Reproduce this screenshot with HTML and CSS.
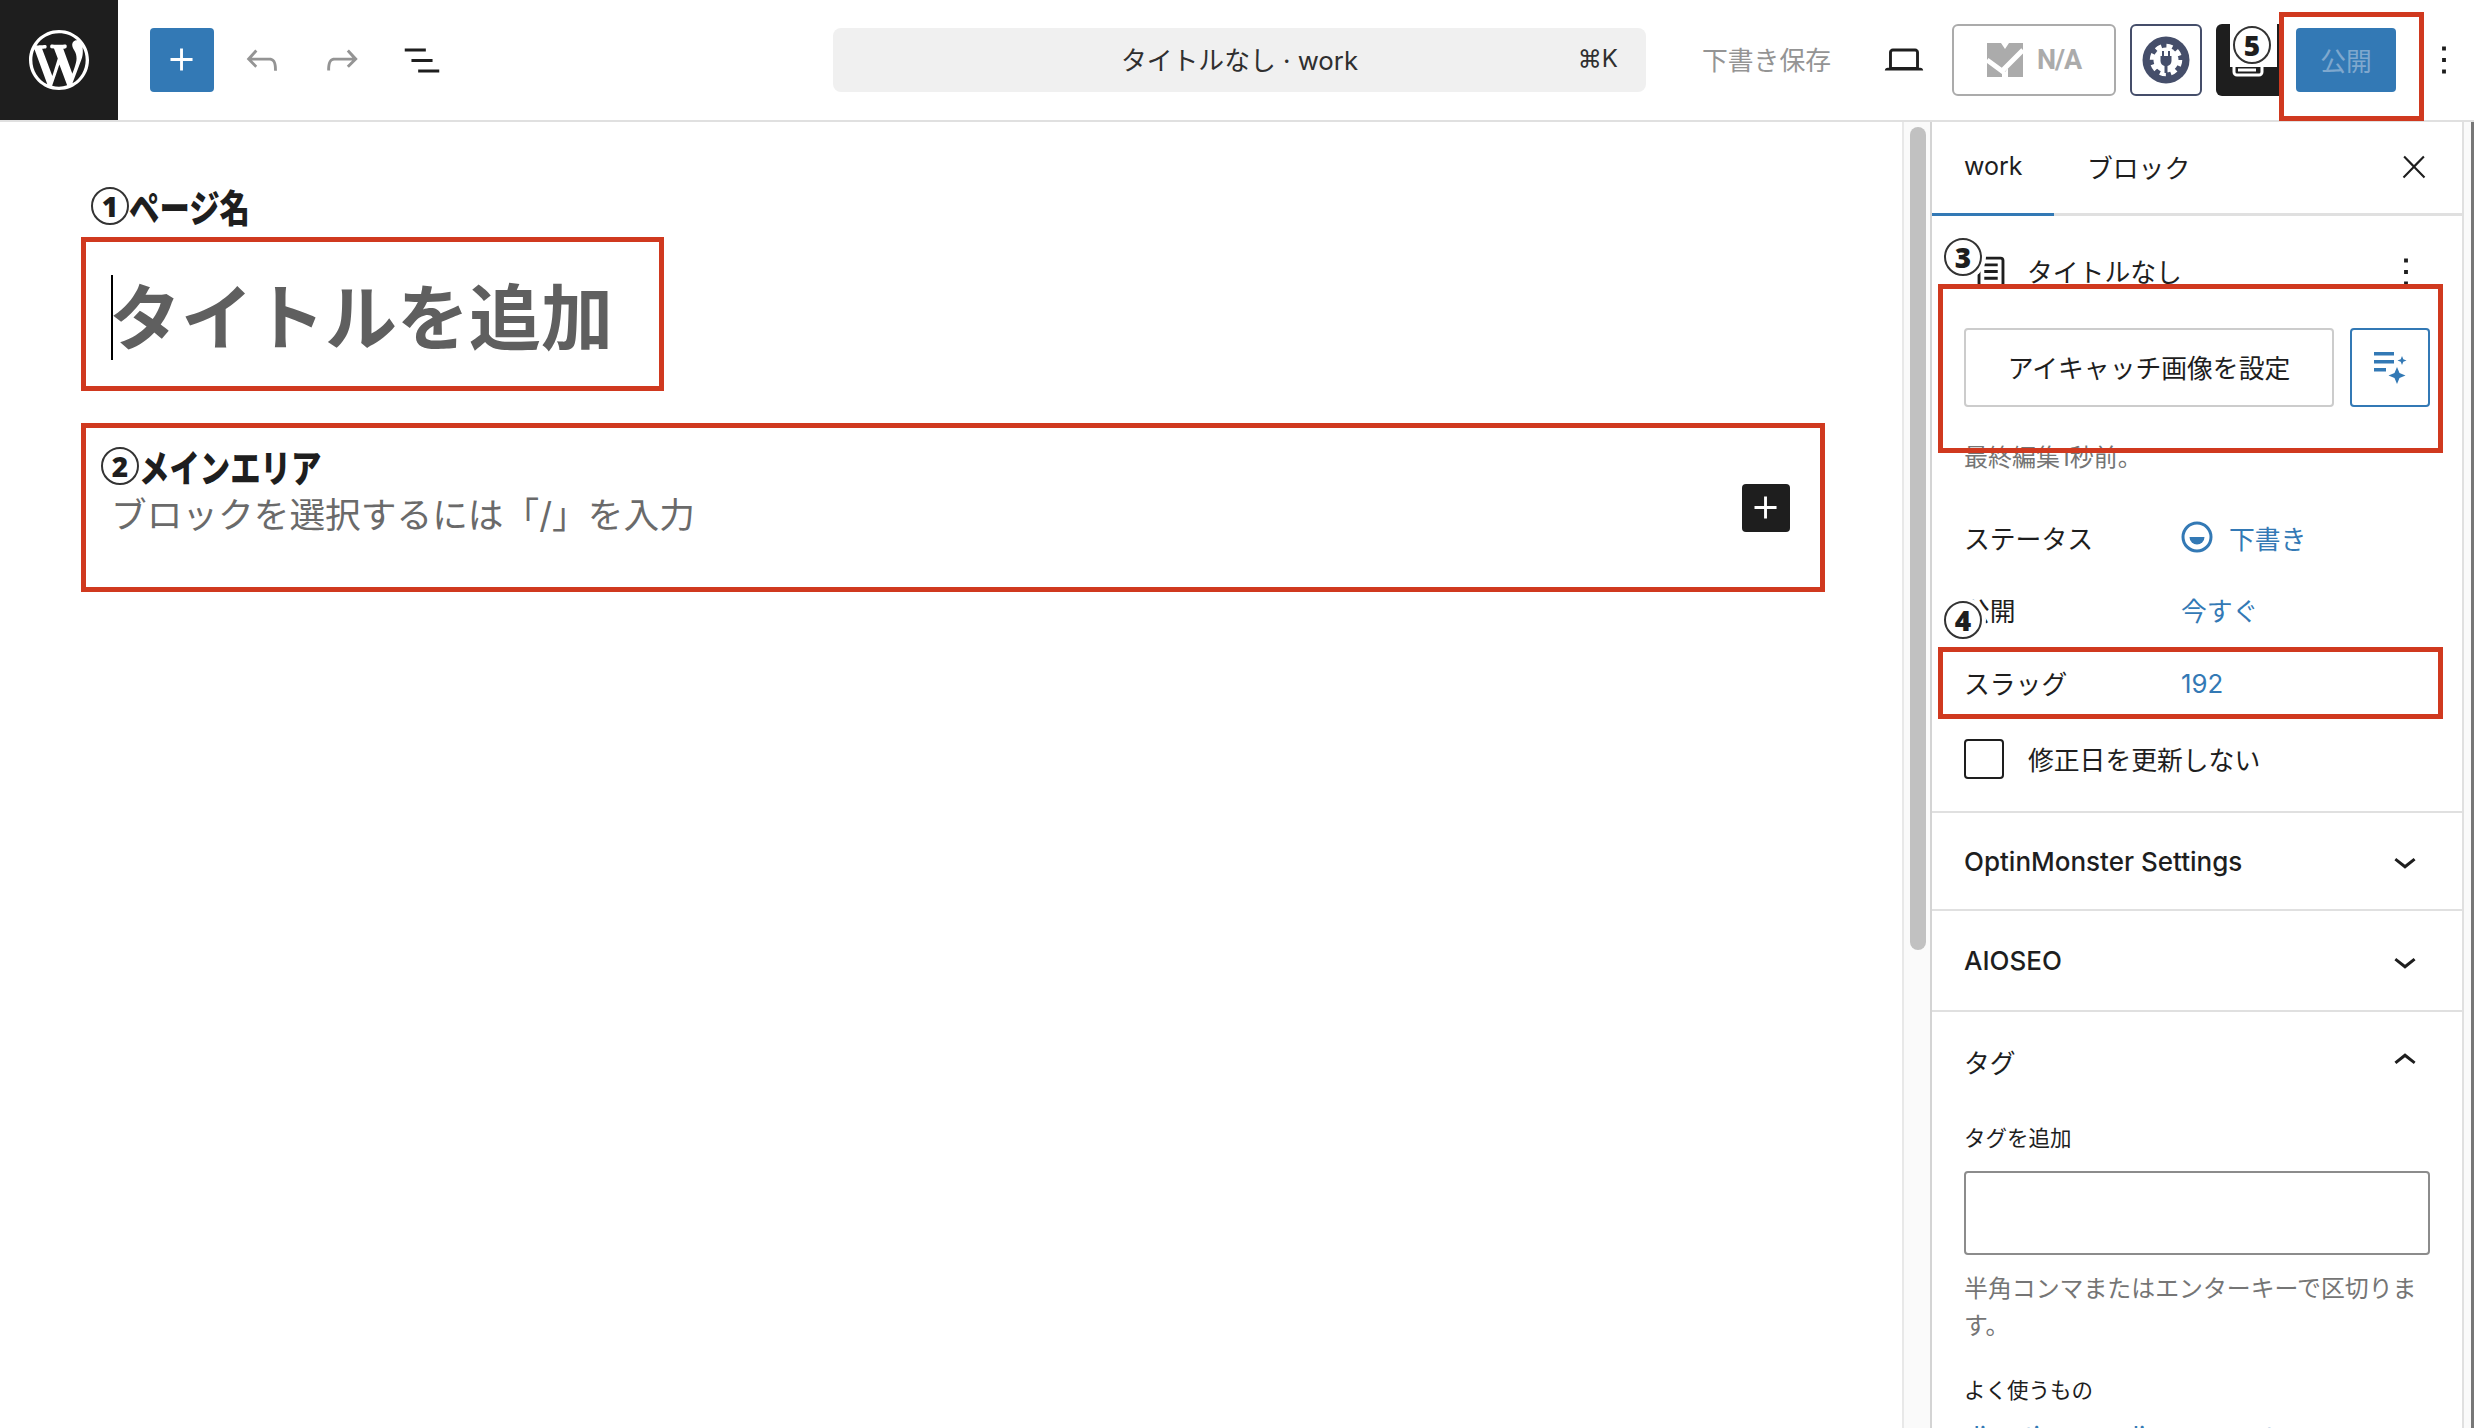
FILE: index.html
```html
<!DOCTYPE html>
<html lang="ja">
<head>
    <meta charset="UTF-8">
    <title>タイトルなし · work</title>
    <link rel="stylesheet" href="styles.css">
</head>
<body>
<div class="page">
    <header class="toolbar">
        <div class="wp-logo">
            <svg width="60" height="60" viewBox="0 0 20 20" fill="#fff"><path d="M20 10c0-5.51-4.49-10-10-10C4.48 0 0 4.49 0 10c0 5.52 4.48 10 10 10 5.51 0 10-4.48 10-10zM7.78 15.37L4.37 6.22c.55-.02 1.17-.08 1.17-.08.5-.06.44-1.13-.06-1.11 0 0-1.45.11-2.37.11-.18 0-.37 0-.58-.01C4.12 2.69 6.87 1.11 10 1.11c2.33 0 4.45.87 6.05 2.34-.68-.11-1.65.39-1.65 1.58 0 .74.45 1.36.9 2.1.35.61.55 1.36.55 2.46 0 1.49-1.4 5-1.4 5l-3.03-8.37c.54-.02.82-.17.82-.17.5-.05.44-1.25-.06-1.22 0 0-1.44.12-2.38.12-.87 0-2.33-.12-2.33-.12-.5-.03-.56 1.2-.06 1.22l.92.08 1.26 3.41zM17.41 10c.24-.64.74-1.87.43-4.25.7 1.29 1.05 2.71 1.05 4.25 0 3.29-1.73 6.24-4.4 7.78.97-2.59 1.94-5.2 2.92-7.78zM6.1 18.09C3.12 16.65 1.11 13.53 1.11 10c0-1.3.23-2.48.72-3.59C3.25 10.3 4.67 14.2 6.1 18.09zm4.03-6.63l2.58 6.98c-.86.29-1.76.45-2.71.45-.79 0-1.57-.11-2.29-.33.81-2.38 1.62-4.74 2.42-7.1z"/></svg>
        </div>
        <div class="btn-add">
            <svg width="46" height="46" viewBox="0 0 24 24" fill="#fff"><path d="M11 12.5V17.5H12.5V12.5H17.5V11H12.5V6H11V11H6V12.5H11Z"/></svg>
        </div>
        <svg class="tool tool-undo" width="46" height="46" viewBox="0 0 24 24" fill="#949494"><path d="M18.3 11.7c-.6-.6-1.4-.9-2.3-.9H6.7l2.9-3.3-1.1-1-4.5 5L8.5 16l1-1-2.7-2.7H16c.5 0 .9.2 1.3.5 1 1 1 3.4 1 4.5v.3h1.5v-.2c0-1.5 0-4.3-1.5-5.7z"/></svg>
        <svg class="tool" width="46" height="46" viewBox="0 0 24 24" fill="#949494"><path d="M15.6 6.5l-1.1 1 2.9 3.3H8c-.9 0-1.7.3-2.3.9-1.4 1.5-1.4 4.2-1.4 5.6v.2h1.5v-.3c0-1.1 0-3.5 1-4.5.3-.3.7-.5 1.3-.5h9.2L14.5 15l1.1 1.1 4.6-4.6-4.6-5z"/></svg>
        <svg class="tool" width="46" height="46" viewBox="0 0 24 24" fill="#1e1e1e"><path d="M3 6h11v1.5H3V6zm3.5 5.5h11V13h-11v-1.5zM21 17H10v1.5h11V17z"/></svg>

        <div class="search-bar">
            <span>タイトルなし · work</span>
            <span class="shortcut">⌘K</span>
        </div>

        <span class="save-draft">下書き保存</span>
        <svg class="tool-view" width="46" height="46" viewBox="0 0 24 24" fill="#1e1e1e"><path d="M20.5 16h-.7V8c0-1.1-.9-2-2-2H6.2c-1.1 0-2 .9-2 2v8h-.7c-.8 0-1.5.7-1.5 1.5h20c0-.8-.7-1.5-1.5-1.5zM5.7 8c0-.3.2-.5.5-.5h11.6c.3 0 .5.2.5.5v7.6H5.7V8z"/></svg>

        <div class="btn-score">
            <svg width="36" height="34" viewBox="0 0 36 34">
                <path d="M0 0h14l4 6 4-6h14v34H21v-9l-3 4-3-4v9H0z" fill="#ababab"/>
                <path d="M0 17l15 11L36 7" fill="none" stroke="#fff" stroke-width="5"/>
            </svg>
            <span>N/A</span>
        </div>

        <div class="btn-plugin">
            <svg width="48" height="48" viewBox="0 0 48 48">
                <circle cx="24" cy="24" r="23.5" fill="#454e6a"/>
                <circle cx="24" cy="24" r="14" fill="none" stroke="#fff" stroke-width="4.500" stroke-dasharray="6 5"/>
                <circle cx="24" cy="24" r="12.500" fill="#fff"/>
                <path d="M20 15h2v5h4v-5h2v5h1.500v5a5.500 5.500 0 0 1-4 5v7h-3v-7a5.500 5.500 0 0 1-4-5v-5H20z" fill="#454e6a"/>
            </svg>
        </div>

        <div class="btn-panel">
            <svg width="64" height="72" viewBox="0 0 64 72" fill="none" stroke="#fff" stroke-width="3"><rect x="18" y="25" width="28" height="26" rx="3"/><path d="M22 46h18"/></svg>
        </div>

        <div class="btn-publish">公開</div>

        <svg class="tool-more" width="46" height="46" viewBox="0 0 24 24" fill="#1e1e1e"><path d="M13 19h-2v-2h2v2zm0-6h-2v-2h2v2zm0-6h-2V5h2v2z"/></svg>
    </header>

    <div class="workspace">
        <main class="editor">
            <h1 class="post-title"><span>タイトルを追加</span></h1>
            <div class="block-row">
                <p class="block-hint">ブロックを選択するには「/」を入力</p>
                <div class="block-add">
                    <svg width="46" height="46" viewBox="0 0 24 24" fill="#fff"><path d="M11 12.5V17.5H12.5V12.5H17.5V11H12.5V6H11V11H6V12.5H11Z"/></svg>
                </div>
            </div>
        </main>

        <div class="scroll-track"><div class="scroll-thumb"></div></div>

        <aside class="sidebar">
            <div class="tabs">
                <span class="tab tab-active">work</span>
                <span class="tab">ブロック</span>
                <svg class="tabs-close" width="36" height="36" viewBox="0 0 24 24" fill="#1e1e1e"><path d="M13 11.8l6.1-6.3-1-1-6.1 6.2-6.1-6.2-1 1 6.1 6.3-6.5 6.7 1 1 6.5-6.6 6.5 6.6 1-1z"/></svg>
            </div>

            <section class="post-panel">
                <div class="post-head">
                    <svg class="post-icon" width="46" height="46" viewBox="0 0 24 24" fill="#1e1e1e"><path d="M15.5 7.5h-7V9h7V7.5Zm-7 3.5h7v1.5h-7V11Zm7 3.5h-7V16h7v-1.5Z"/><path d="M17 4H7a2 2 0 0 0-2 2v12a2 2 0 0 0 2 2h10a2 2 0 0 0 2-2V6a2 2 0 0 0-2-2Zm.5 14a.5.5 0 0 1-.5.5H7a.5.5 0 0 1-.5-.5V6a.5.5 0 0 1 .5-.5h10a.5.5 0 0 1 .5.5v12Z"/></svg>
                    <span class="post-name">タイトルなし</span>
                    <svg class="post-more" width="46" height="46" viewBox="0 0 24 24" fill="#1e1e1e"><path d="M13 19h-2v-2h2v2zm0-6h-2v-2h2v2zm0-6h-2V5h2v2z"/></svg>
                </div>

                <div class="featured">
                    <div class="featured-btn">アイキャッチ画像を設定</div>
                    <div class="featured-ai">
                        <svg width="40" height="40" viewBox="0 0 40 40" fill="#3379b5">
                            <rect x="4" y="4" width="20" height="3.5"/>
                            <rect x="4" y="12" width="20" height="3.5"/>
                            <rect x="4" y="20" width="12" height="3.5"/>
                            <path d="M27 19l2.500 6 6 2.500-6 2.500-2.500 6-2.500-6-6-2.500 6-2.500z"/>
                            <path d="M32 8l1.300 3.200 3.200 1.300-3.200 1.300-1.300 3.200-1.300-3.200-3.200-1.300 3.200-1.300z"/>
                        </svg>
                    </div>
                </div>

                <p class="last-edit">最終編集1秒前。</p>

                <div class="meta-rows">
                    <div class="meta-row">
                        <span class="meta-label">ステータス</span>
                        <span class="meta-value">
                            <svg class="draft-icon" width="32" height="32" viewBox="0 0 32 32"><circle cx="16" cy="16" r="14" fill="none" stroke="#3379b5" stroke-width="3"/><path d="M8.500 16h15a7.500 7.500 0 0 1-15 0z" fill="#3379b5"/></svg>
                            下書き
                        </span>
                    </div>
                    <div class="meta-row">
                        <span class="meta-label">公開</span>
                        <span class="meta-value">今すぐ</span>
                    </div>
                    <div class="meta-row">
                        <span class="meta-label">スラッグ</span>
                        <span class="meta-value meta-slug">192</span>
                    </div>
                </div>

                <label class="check-row">
                    <span class="check-box"></span>
                    <span class="check-text">修正日を更新しない</span>
                </label>
            </section>

            <section class="fold fold-optin">
                <span>OptinMonster Settings</span>
                <svg width="46" height="46" viewBox="0 0 24 24" fill="#1e1e1e"><path d="M17.500 11.600L12 16l-5.500-4.400.9-1.200L12 14l4.500-3.600 1 1.200z"/></svg>
            </section>
            <section class="fold fold-seo">
                <span>AIOSEO</span>
                <svg width="46" height="46" viewBox="0 0 24 24" fill="#1e1e1e"><path d="M17.500 11.600L12 16l-5.500-4.400.9-1.200L12 14l4.500-3.600 1 1.200z"/></svg>
            </section>

            <section class="tags">
                <div class="tags-head">
                    <span>タグ</span>
                    <svg width="46" height="46" viewBox="0 0 24 24" fill="#1e1e1e"><path d="M6.500 12.400L12 8l5.500 4.400-.9 1.200L12 10l-4.500 3.600-1-1.200z"/></svg>
                </div>
                <div class="tags-label">タグを追加</div>
                <div class="tags-input"></div>
                <p class="tags-help">半角コンマまたはエンターキーで区切ります。</p>
                <div class="tags-popular">よく使うもの</div>
                <div class="tags-links"><span>direction</span><span>media</span><span>concept</span></div>
            </section>
        </aside>
        <div class="edge-strip"></div>
    </div>

    <!-- annotations drawn on top of the screen -->
    <div class="note-box box-publish"></div>
    <div class="note-box box-title"></div>
    <div class="note-box box-main"></div>
    <div class="note-box box-featured"></div>
    <div class="note-box box-slug"></div>

    <div class="note note-1"><span class="ring">1</span><span class="note-text">ページ名</span></div>
    <div class="note note-2"><span class="ring">2</span><span class="note-text">メインエリア</span></div>
    <div class="note note-3"><span class="ring">3</span></div>
    <div class="note note-4"><span class="ring">4</span></div>
    <div class="note-patch"><span class="ring">5</span></div>
</div>
</body>
</html>
```

FILE: styles.css
```css
* {
    box-sizing: border-box;
}

body {
    margin: 0;
    background-color: #fff;
    color: #1e1e1e;
    font-family: "Inter", "Noto Sans CJK JP", sans-serif;
    font-size: 25.8px;
}

p {
    margin: 0;
}

.page {
    position: relative;
    width: 2474px;
    height: 1428px;
    overflow: hidden;
}

/* toolbar */
.toolbar {
    display: flex;
    align-items: center;
    height: 122px;
    border-bottom: 2px solid #e0e0e0;
}

.toolbar > svg {
    flex-shrink: 0;
}

.wp-logo {
    display: flex;
    align-items: center;
    justify-content: center;
    width: 118px;
    height: 120px;
    background-color: #1e1e1e;
}

.btn-add {
    display: flex;
    align-items: center;
    justify-content: center;
    width: 64px;
    height: 64px;
    margin-left: 32px;
    background-color: #3379b5;
    border-radius: 4px;
}

.tool {
    margin-left: 34px;
}

.tool-undo {
    margin-left: 25px;
}

.search-bar {
    position: relative;
    display: flex;
    align-items: center;
    justify-content: center;
    width: 813px;
    height: 64px;
    margin-left: 388px;
    padding-bottom: 3px;
    background-color: #f0f0f0;
    border-radius: 8px;
    color: #2f2f2f;
}

.shortcut {
    position: absolute;
    right: 28px;
    font-size: 24px;
}

.save-draft {
    width: 130px;
    margin-left: 56px;
    margin-right: 1px;
    padding-bottom: 3px;
    color: #949494;
    white-space: nowrap;
}

.tool-view {
    margin-left: 48px;
}

.btn-score {
    display: flex;
    align-items: center;
    justify-content: center;
    gap: 14px;
    width: 164px;
    height: 72px;
    margin-left: 25px;
    border: 2px solid #ababab;
    border-radius: 6px;
    color: #ababab;
    font-family: "Roboto", sans-serif;
    font-size: 27px;
    font-weight: 700;
    letter-spacing: -1px;
}

.btn-plugin {
    display: flex;
    align-items: center;
    justify-content: center;
    width: 72px;
    height: 72px;
    margin-left: 14px;
    border: 2px solid #454e6a;
    border-radius: 6px;
}

.btn-panel {
    width: 64px;
    height: 72px;
    margin-left: 14px;
    background-color: #1e1e1e;
    border-radius: 6px 0 0 6px;
}

.btn-publish {
    display: flex;
    align-items: center;
    justify-content: center;
    width: 100px;
    height: 64px;
    margin-left: 16px;
    padding-bottom: 2px;
    background-color: #3379b5;
    border-radius: 4px;
    color: #7fa8ce;
}

.tool-more {
    margin-left: 25px;
}

/* main area */
.workspace {
    display: flex;
    height: 1306px;
}

.editor {
    width: 1902px;
    padding: 153px 112px 0 111px;
}

.post-title {
    margin: 0;
    font-size: 72px;
    font-weight: 700;
    line-height: 85px;
    color: #5f5f5f;
}

.post-title span {
    display: inline-block;
    text-indent: -4px;
    border-left: 2px solid #000;
}

.block-row {
    display: flex;
    justify-content: space-between;
    align-items: flex-start;
    margin-top: 124px;
    margin-left: 1px;
}

.block-hint {
    margin-top: 10px;
    margin-left: -1px;
    font-size: 35.700px;
    line-height: 42px;
    color: #6a6a6a;
}

.block-add {
    display: flex;
    align-items: center;
    justify-content: center;
    width: 48px;
    height: 48px;
    background-color: #1e1e1e;
    border-radius: 4px;
}

.scroll-track {
    width: 28px;
    padding: 5px 4px 0 6px;
    background-color: #fafafa;
    border-left: 2px solid #e8e8e8;
}

.scroll-thumb {
    width: 16px;
    height: 823px;
    background-color: #c1c1c1;
    border-radius: 8px;
}

/* sidebar */
.sidebar {
    width: 534px;
    border-left: 2px solid #d4d4d4;
    border-right: 2px solid #e0e0e0;
}

.edge-strip {
    flex: 1;
    background-color: #fafafa;
    border-right: 3px solid #777;
}

.tabs {
    display: flex;
    align-items: center;
    height: 94px;
    border-bottom: 3px solid #e0e0e0;
}

.tab {
    display: flex;
    align-items: center;
    height: 94px;
    padding-bottom: 3px;
}

.tab + .tab {
    margin-left: 33px;
}

.tab-active {
    width: 122px;
    height: 94px;
    margin-bottom: -3px;
    padding-left: 32px;
    border-bottom: 3px solid #3379b5;
    font-size: 25px;
}

.tabs-close {
    margin-left: auto;
    margin-right: 30px;
    margin-bottom: 1px;
}

.post-panel {
    height: 597px;
    padding: 33px 32px 0 32px;
    border-bottom: 2px solid #e0e0e0;
}

.post-head {
    display: flex;
    align-items: center;
    height: 46px;
}

.post-icon {
    margin-left: 4px;
}

.post-name {
    margin-left: 13px;
    padding-bottom: 3px;
}

.post-more {
    margin-left: auto;
    margin-right: 1px;
}

.featured {
    display: flex;
    gap: 16px;
    height: 79px;
    margin-top: 33px;
}

.featured-btn {
    display: flex;
    align-items: center;
    justify-content: center;
    width: 370px;
    padding-bottom: 3px;
    border: 2px solid #ccc;
    border-radius: 4px;
}

.featured-ai {
    display: flex;
    align-items: center;
    justify-content: center;
    width: 80px;
    border: 2px solid #3379b5;
    border-radius: 4px;
}

.last-edit {
    margin-top: 33px;
    font-size: 24px;
    line-height: 36px;
    color: #757575;
}

.meta-rows {
    margin-top: 27px;
}

.meta-row {
    display: flex;
    align-items: center;
    height: 72.500px;
    padding-bottom: 4px;
}

.meta-label {
    width: 217px;
}

.meta-value {
    display: flex;
    align-items: center;
    color: #3379b5;
}

.meta-slug {
    padding-top: 3px;
}

.draft-icon {
    margin-right: 16px;
}

.check-row {
    display: flex;
    align-items: center;
    gap: 24px;
    margin-top: 18.500px;
}

.check-text {
    padding-bottom: 2px;
}

.check-box {
    width: 40px;
    height: 40px;
    border: 2px solid #1e1e1e;
    border-radius: 4px;
}

.fold {
    display: flex;
    align-items: center;
    justify-content: space-between;
    padding: 0 24px 0 32px;
    border-bottom: 2px solid #e0e0e0;
    font-size: 26px;
    font-weight: 500;
}

.fold svg {
    margin-right: 10px;
}

.fold-optin {
    height: 98px;
}

.fold-seo {
    height: 101px;
}

.tags {
    padding: 0 32px 0 32px;
}

.tags-head {
    display: flex;
    align-items: center;
    justify-content: space-between;
    height: 98px;
    padding-right: 2px;
}

.tags-label,
.tags-popular {
    font-size: 21.500px;
    line-height: 32px;
}

.tags-label {
    margin-top: 12px;
}

.tags-input {
    height: 84px;
    margin-top: 17px;
    border: 2px solid #8c8c8c;
    border-radius: 4px;
}

.tags-help {
    margin-top: 15px;
    font-size: 23.900px;
    line-height: 37px;
    color: #757575;
}

.tags-popular {
    margin-top: 30px;
}

.tags-links {
    display: flex;
    gap: 15px;
    margin-top: 12px;
    line-height: 36px;
    color: #3379b5;
}

/* annotations */
.note-box {
    position: absolute;
    border: 5px solid #d0391f;
}

.box-publish {
    left: 2279px;
    top: 12px;
    width: 145px;
    height: 109px;
}

.box-title {
    left: 81px;
    top: 237px;
    width: 583px;
    height: 154px;
}

.box-main {
    left: 81px;
    top: 423px;
    width: 1744px;
    height: 169px;
}

.box-featured {
    left: 1938px;
    top: 284px;
    width: 505px;
    height: 169px;
}

.box-slug {
    left: 1938px;
    top: 647px;
    width: 505px;
    height: 72px;
}

.note {
    position: absolute;
    display: flex;
    align-items: center;
    height: 38px;
}

.note-1 {
    left: 91px;
    top: 187px;
}

.note-2 {
    left: 101px;
    top: 447px;
}

.note-3 {
    left: 1944px;
    top: 238px;
}

.note-4 {
    left: 1944px;
    top: 601px;
}

.note-3 .ring,
.note-4 .ring {
    box-shadow: 0 0 0 4px #fff;
}

.ring {
    display: flex;
    align-items: center;
    justify-content: center;
    flex-shrink: 0;
    width: 38px;
    height: 38px;
    background-color: #fff;
    border: 2px solid #333;
    border-radius: 50%;
    font-family: "Open Sans", sans-serif;
    font-size: 28px;
    font-weight: 800;
    color: #1e1e1e;
}

.note-text {
    display: inline-block;
    font-family: "Noto Sans CJK JP", sans-serif;
    font-size: 38px;
    font-weight: 900;
    line-height: 38px;
    white-space: nowrap;
    transform: scaleX(.8);
    transform-origin: left;
}

.note-patch {
    position: absolute;
    left: 2230px;
    top: 24px;
    display: flex;
    justify-content: center;
    width: 47px;
    height: 43px;
    padding-top: 2px;
    padding-right: 3px;
    background-color: #fff;
}
```
